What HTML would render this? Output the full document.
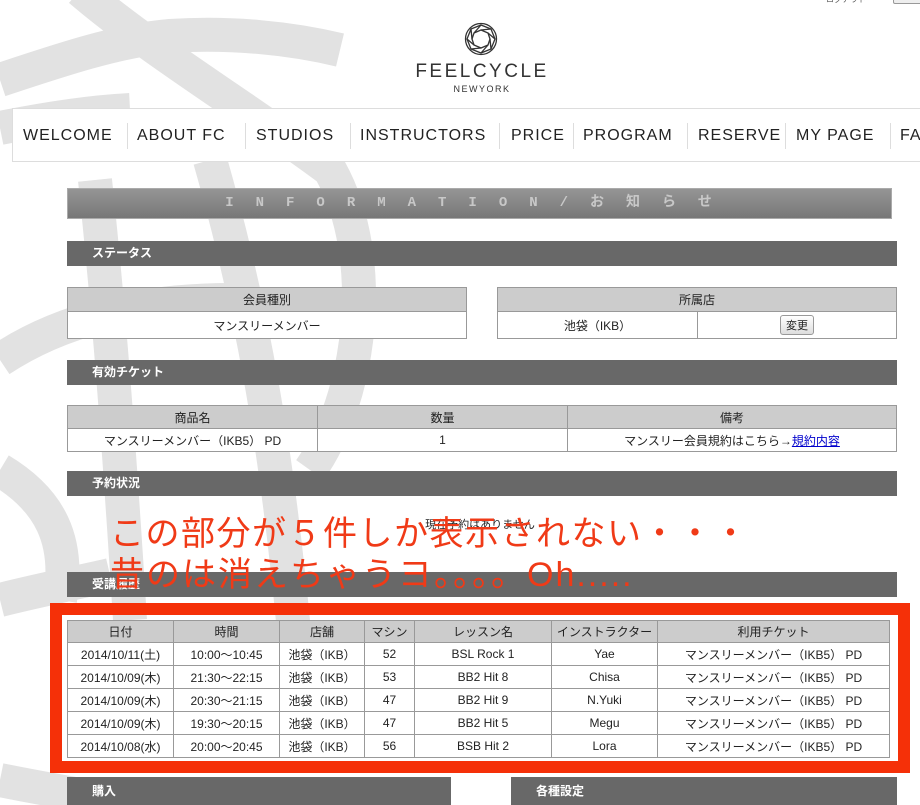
<!DOCTYPE html>
<html><head><meta charset="utf-8">
<style>
*{margin:0;padding:0;box-sizing:border-box}
body{width:920px;height:805px;overflow:hidden;background:#fff;position:relative;font-family:"Liberation Sans","Noto Sans CJK JP",sans-serif;color:#222}
.a{position:absolute}
.nav{left:12px;top:108px;width:920px;height:54px;border:1px solid #ddd;background:#fff}
.nav span{position:absolute;top:18px;font-size:16px;color:#222;letter-spacing:1px}
.sep{position:absolute;top:14px;width:1px;height:26px;background:#ddd}
.hd{background:#686868;color:#fff;font-weight:bold;font-size:12px;padding-left:25px;line-height:25px;height:25px}
table{border-collapse:collapse;position:absolute;font-size:12px;background:#fff}
td,th{border:1px solid #999;text-align:center;font-weight:normal;padding:0}
th{background:#ccc}
</style></head><body>
<svg class="a" style="left:0;top:0" width="920" height="805">
<g fill="none" stroke="#e2e2e2" stroke-width="34">
<path d="M80,-10 C150,50 250,110 330,170 C380,260 360,400 310,470"/>
<path d="M0,80 C60,60 120,40 170,36 C230,32 290,38 340,50"/>
<path d="M0,128 C40,120 90,112 130,110"/>
<path d="M95,180 C110,320 120,460 130,620"/>
<path d="M210,160 C250,300 280,450 300,700"/>
<path d="M0,360 C60,320 140,300 230,300"/>
<path d="M0,600 C40,590 80,582 110,575"/>
<path d="M0,780 C40,788 80,795 110,800"/>
<path d="M0,470 C50,500 70,540 60,600"/>
</g>
</svg>
<div class="a" style="left:826px;top:-6px;width:60px;height:9px;font-size:8px;color:#555">ログアウト</div>
<div class="a" style="left:893px;top:-6px;width:30px;height:10px;border:1px solid #999;border-radius:2px;background:#eee"></div>
<svg class="a" style="left:464px;top:21px" width="34" height="36" viewBox="0 0 34 36">
<g fill="none" stroke="#333" stroke-width="1.3">
<circle cx="17" cy="18" r="15.5"/>
<polygon points="17,4 27,8 31,18 27,28 17,32 7,28 3,18 7,8"/>
<polygon points="17,9 24,12 26,18 24,24 17,27 10,24 8,18 10,12"/>
<path d="M17,4 L10,12 M27,8 L17,9 M31,18 L24,12 M27,28 L26,18 M17,32 L24,24 M7,28 L17,27 M3,18 L10,24 M7,8 L8,18"/>
</g></svg>
<div class="a" style="left:380px;top:61px;width:204px;text-align:center;font-size:19px;letter-spacing:2.5px;color:#333">FEELCYCLE</div>
<div class="a" style="left:380px;top:84px;width:204px;text-align:center;font-size:9px;letter-spacing:1.5px;color:#333">NEWYORK</div>
<div class="a nav">
<span style="left:10px">WELCOME</span><div class="sep" style="left:114px"></div>
<span style="left:124px">ABOUT FC</span><div class="sep" style="left:232px"></div>
<span style="left:243px">STUDIOS</span><div class="sep" style="left:337px"></div>
<span style="left:347px">INSTRUCTORS</span><div class="sep" style="left:486px"></div>
<span style="left:498px">PRICE</span><div class="sep" style="left:560px"></div>
<span style="left:570px">PROGRAM</span><div class="sep" style="left:674px"></div>
<span style="left:685px">RESERVE</span><div class="sep" style="left:772px"></div>
<span style="left:783px">MY PAGE</span><div class="sep" style="left:877px"></div>
<span style="left:887px">FAQ</span>
</div>
<div class="a" style="left:67px;top:188px;width:825px;height:31px;background:linear-gradient(#959595,#777);border:1px solid #aaa;color:#c8c8c8;font-weight:bold;font-size:14px;line-height:28px;text-align:center;letter-spacing:22px;font-family:'Liberation Mono','Noto Sans CJK JP',monospace">INFORMATION/お知らせ</div>

<div class="a hd" style="left:67px;top:241px;width:830px">ステータス</div>
<table style="left:67px;top:287px;width:400px"><tr style="height:24px"><th>会員種別</th></tr><tr style="height:27px"><td>マンスリーメンバー</td></tr></table>
<table style="left:497px;top:287px;width:400px"><tr style="height:24px"><th colspan="2">所属店</th></tr><tr style="height:27px"><td style="width:200px">池袋（IKB）</td><td><span style="display:inline-block;border:1px solid #999;border-radius:3px;background:linear-gradient(#fff,#ddd);font-size:11px;padding:1px 5px">変更</span></td></tr></table>

<div class="a hd" style="left:67px;top:360px;width:830px">有効チケット</div>
<table style="left:67px;top:405px;width:830px"><tr style="height:23px"><th style="width:250px">商品名</th><th style="width:250px">数量</th><th>備考</th></tr><tr style="height:23px"><td>マンスリーメンバー（IKB5） PD</td><td>1</td><td>マンスリー会員規約はこちら→<span style="color:#00c;text-decoration:underline">規約内容</span></td></tr></table>

<div class="a hd" style="left:67px;top:471px;width:830px">予約状況</div>
<div class="a" style="left:380px;top:516px;width:200px;text-align:center;font-size:11px">現在予約はありません</div>

<div class="a hd" style="left:67px;top:572px;width:830px">受講履歴</div>
<div class="a" style="left:50px;top:603px;width:860px;height:170px;border:12px solid #f53008"></div>
<table style="left:67px;top:620px;width:823px"><tr style="height:22px"><th style="width:106px">日付</th><th style="width:106px">時間</th><th style="width:85px">店舗</th><th style="width:50px">マシン</th><th style="width:137px">レッスン名</th><th style="width:106px">インストラクター</th><th>利用チケット</th></tr>
<tr style="height:23px"><td>2014/10/11(土)</td><td>10:00～10:45</td><td>池袋（IKB）</td><td>52</td><td>BSL Rock 1</td><td>Yae</td><td>マンスリーメンバー（IKB5） PD</td></tr>
<tr style="height:23px"><td>2014/10/09(木)</td><td>21:30～22:15</td><td>池袋（IKB）</td><td>53</td><td>BB2 Hit 8</td><td>Chisa</td><td>マンスリーメンバー（IKB5） PD</td></tr>
<tr style="height:23px"><td>2014/10/09(木)</td><td>20:30～21:15</td><td>池袋（IKB）</td><td>47</td><td>BB2 Hit 9</td><td>N.Yuki</td><td>マンスリーメンバー（IKB5） PD</td></tr>
<tr style="height:23px"><td>2014/10/09(木)</td><td>19:30～20:15</td><td>池袋（IKB）</td><td>47</td><td>BB2 Hit 5</td><td>Megu</td><td>マンスリーメンバー（IKB5） PD</td></tr>
<tr style="height:23px"><td>2014/10/08(水)</td><td>20:00～20:45</td><td>池袋（IKB）</td><td>56</td><td>BSB Hit 2</td><td>Lora</td><td>マンスリーメンバー（IKB5） PD</td></tr></table>

<div class="a hd" style="left:67px;top:777px;width:384px;height:28px;line-height:28px">購入</div>
<div class="a hd" style="left:511px;top:777px;width:386px;height:28px;line-height:28px">各種設定</div>

<div class="a" style="left:110px;top:514px;font-size:34px;line-height:41px;color:#f03a17;white-space:nowrap;letter-spacing:1.5px">この部分が５件しか表示されない・・・<br><span style="letter-spacing:2px">昔のは消えちゃうヨ。。。。Oh.....</span></div>
</body></html>
